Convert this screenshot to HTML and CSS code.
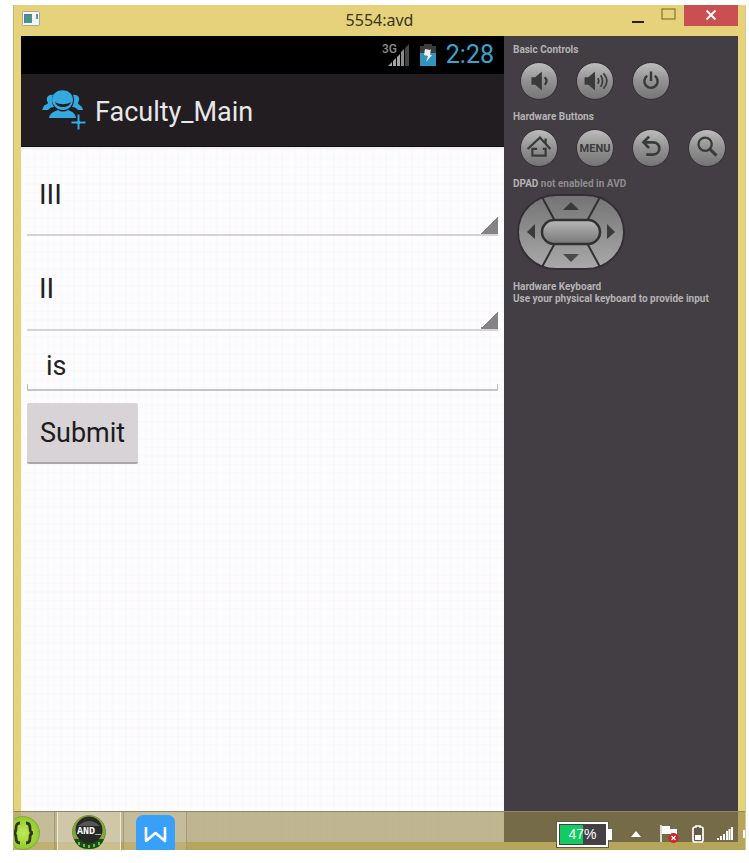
FILE: index.html
```html
<!DOCTYPE html>
<html lang="en">
<head>
<meta charset="utf-8">
<meta name="viewport" content="width=device-width, initial-scale=1">
<title>5554:avd</title>
<link rel="stylesheet" href="styles.css">
</head>
<body>
<div class="desktop">
  <header class="titlebar">
    <svg class="app-icon" width="18" height="15" viewBox="0 0 18 15"><rect x=".5" y=".5" width="17" height="14" rx="1" fill="#f4f6f4" stroke="#a7a998"/><rect x="2" y="3" width="8" height="9" fill="#4a9486"/><path d="M2 3h1v9H2zM2 3h8v1H2z" fill="#5878a0"/><rect x="14" y="3" width="2" height="5" fill="#5a9a98"/></svg>
    <h1 class="window-title">5554:avd</h1>
    <div class="window-buttons">
      <button class="win-btn minimize" aria-label="Minimize"><svg width="14" height="14" viewBox="0 0 14 14"><path d="M1 12h12v2.400H1z" fill="#26220f"/></svg></button>
      <button class="win-btn maximize" aria-label="Maximize"><svg width="15" height="12" viewBox="0 0 15 12"><rect x="1" y="1" width="13" height="10" fill="none" stroke="#8c7d3c" stroke-width="1.300"/></svg></button>
      <button class="win-btn close" aria-label="Close"><svg width="12" height="12" viewBox="0 0 12 12"><path d="M1.500 1.500l9 9M10.500 1.500l-9 9" stroke="#fff" stroke-width="1.900"/></svg></button>
    </div>
  </header>

  <div class="emulator">
    <main class="phone">
      <div class="statusbar">
        <svg width="28" height="26" viewBox="0 0 28 26">
          <text x="0" y="11" font-family="Roboto, sans-serif" font-size="12" font-weight="500" fill="#8d8d8d">3G</text>
          <path d="M6 24l4-4v4zM11 19l3-3v8h-3zM15 15l3-3v12h-3z" fill="#a5a5a5"/><path d="M19 10l3-3v17h-3z" fill="#8c8c8c"/><path d="M23 6l4-4v22h-4z" fill="#454545"/>
        </svg>
        <svg width="16" height="26" viewBox="0 0 16 26"><path d="M4 2h8v2h4v8H0V4h4z" fill="#3c3c3c"/><path d="M0 11h16v13H0z" fill="#3293bd"/><path d="M5 7l5 1 1-1-1 6h2l-6 7 2-6-4-1z" fill="#f0f0f0"/></svg>
        <time class="clock">2:28</time>
      </div>
      <div class="actionbar">
        <svg width="46" height="40" viewBox="0 0 46 40" fill="#33a9df">
          <path d="M2 18c1-4 4-3 5-5-3-5 0-9 5-8-2 4-1 9 1 12-3 0-4 1-6 3H1zM42 20c-1-5-5-5-5-7 3-5 0-9-5-8 2 4 1 9-1 12 3 0 4 1 6 3z"/>
          <path d="M11 10C11-3 32-3 32 10c0 5-4 10-10 10S11 15 11 10z"/>
          <path d="M14 12c5 3 11 3 16 0-1 3-4 5-8 5s-7-2-8-5z" fill="#211d21"/>
          <path d="M8 28c1-5 4-6 9-8 3 2 7 2 10 0 5 2 7 3 8 8z"/>
          <path d="M36 24h3v7h6v3h-6v6h-3v-6h-6v-3h6z" stroke="#211d21"/>
        </svg>
        <h2 class="app-title">Faculty_Main</h2>
      </div>
      <form class="form" onsubmit="return false">
        <div class="spinner"><select aria-label="Year"><option>III</option></select></div>
        <div class="spinner"><select aria-label="Semester"><option>II</option></select></div>
        <div class="field"><input type="text" aria-label="Subject" value="is" spellcheck="false"></div>
        <button class="submit" type="submit">Submit</button>
      </form>
    </main>

    <aside class="controls">
      <h3>Basic Controls</h3>
      <div class="keys">
        <button class="key" aria-label="Volume down"><svg viewBox="0 0 38 38"><path d="M11 15h4l7-6v20l-7-6h-4z" fill="#3b3a3b"/><path d="M25 15q4 4 0 8" fill="none" stroke="#3b3a3b" stroke-width="2.400"/></svg></button>
        <button class="key" aria-label="Volume up"><svg viewBox="0 0 38 38"><path d="M8 15h4l7-6v20l-7-6H8z" fill="#3b3a3b"/><path d="M22 16q2 3 0 6M25 13q4 6 0 12M28 11q7 8 0 16" fill="none" stroke="#3b3a3b" stroke-width="1.800"/></svg></button>
        <button class="key" aria-label="Power"><svg viewBox="0 0 38 38" fill="none" stroke="#3b3a3b" stroke-width="2.600"><path d="M15 13.500a7 7 0 1 0 8 0M19 9v10"/></svg></button>
      </div>
      <h3>Hardware Buttons</h3>
      <div class="keys">
        <button class="key" aria-label="Home"><svg viewBox="0 0 38 38" fill="none" stroke="#3b3a3b" stroke-width="2.300"><path d="M7 20L20 8l11 12M26 15V9M17 20h-5v7h14v-7h-3"/></svg></button>
        <button class="key key-text">MENU</button>
        <button class="key" aria-label="Back"><svg viewBox="0 0 38 38" fill="none" stroke="#3b3a3b" stroke-width="2.800"><path d="M17 7l-6 6 6 6M11 13h10c9 0 9 13 0 13h-7"/></svg></button>
        <button class="key" aria-label="Search"><svg viewBox="0 0 38 38" fill="none" stroke="#3b3a3b"><circle cx="17" cy="15" r="7" stroke-width="2.400"/><path d="M22 20l7 7" stroke-width="3.200"/></svg></button>
      </div>
      <h3>DPAD <span class="dim">not enabled in AVD</span></h3>
      <svg class="dpad" width="108" height="76" viewBox="0 0 108 76">
        <defs>
          <linearGradient id="pad" x2="0" y2="1"><stop stop-color="#737373"/><stop offset="1" stop-color="#aaa"/></linearGradient>
          <linearGradient id="mid" x2="0" y2="1"><stop stop-color="#b8b8b8"/><stop offset="1" stop-color="#777"/></linearGradient>
        </defs>
        <rect x="1" y="1" width="106" height="74" rx="38" fill="url(#pad)" stroke="#333034" stroke-width="2"/>
        <path d="M25 3l13 24M83 3L70 27M25 73l13-24M83 73L70 49" stroke="#333034" stroke-width="2"/>
        <rect x="25" y="26" width="58" height="24" rx="12" fill="url(#mid)" stroke="#333034" stroke-width="2.500"/>
        <path d="M46 16l8-8 8 8z" fill="#3b3a3b"/><path d="M46 60l8 8 8-8z" fill="#4b4a4b"/><path d="M18 30v15l-8-7zM90 30v15l8-7z" fill="#3b3a3b"/>
      </svg>
      <h3>Hardware Keyboard<br>Use your physical keyboard to provide input</h3>
    </aside>
  </div>

  <footer class="taskbar">
    <nav class="tasks" aria-label="Running apps">
      <button class="task first" aria-label="Editor"><svg width="26" height="36" viewBox="0 0 26 36"><defs><radialGradient id="lime"><stop stop-color="#c1e957"/><stop offset="1" stop-color="#8fc92e"/></radialGradient></defs><circle cx="9" cy="18" r="16.500" fill="url(#lime)" stroke="#86a83d"/><path d="M6 8q-4 0-4 5t-3 5q3 0 3 5t4 5M12 8q4 0 4 5t3 5q-3 0-3 5t-4 5" fill="none" stroke="#303a16" stroke-width="2.800"/></svg></button>
      <button class="task active" aria-label="Android emulator"><svg width="34" height="34" viewBox="0 0 34 34"><circle cx="17" cy="17" r="16.500" fill="#86aa36" stroke="#768f3d"/><path d="M2 24h30q-3 10-15 10T2 24z" fill="#164f19"/><path d="M6 27h2v3H6zM11 29h2v3h-2zM16 30h2v3h-2zM21 29h2v3h-2zM26 27h2v3h-2z" fill="#70bd38"/><circle cx="17" cy="15" r="13.500" fill="#262826"/><path d="M6 11q11-10 22 0z" fill="#555"/><text x="5" y="19" font-family="Liberation Mono, monospace" font-size="10" font-weight="700" fill="#fff">AND_</text></svg></button>
      <button class="task" aria-label="Writer"><svg width="39" height="36" viewBox="0 0 39 36"><rect width="39" height="40" rx="7" fill="#38a0f8"/><path d="M10 12v14l9.500-8 9.500 8V12" fill="none" stroke="#fff" stroke-width="2.600" stroke-linejoin="round"/></svg></button>
    </nav>
    <div class="tray">
      <div class="battery"><span>47%</span></div>
      <svg class="more" width="10" height="6" viewBox="0 0 10 6"><path d="M5 0l5 6H0z" fill="#fff"/></svg>
      <svg width="19" height="18" viewBox="0 0 19 18"><path d="M1 0v17" stroke="#fff" stroke-width="1.500"/><path d="M2 1h8v3h7v8l-7-1V9H2z" fill="#fff"/><circle cx="13.500" cy="13" r="5" fill="#cf2229"/><path d="M11.500 11l4 4M15.500 11l-4 4" stroke="#fff" stroke-width="1.300"/></svg>
      <svg width="12" height="18" viewBox="0 0 12 18"><path d="M4 2V1h4v1h1q2 0 2 2v11q0 2-2 2H3q-2 0-2-2V4q0-2 2-2z" fill="#635b48" stroke="#fff" stroke-width="1.700"/><path d="M3 10h6v5H3z" fill="#fff"/></svg>
      <svg width="16" height="14" viewBox="0 0 16 14"><path d="M0 11h2v2H0zM3 9h2v4H3zM6 7h2v6H6zM9 4h2v9H9zM11.500 2h2v11h-2zM14 0h2v13h-2z" fill="#fff"/></svg>
      <span class="edge"></span>
    </div>
  </footer>
</div>
</body>
</html>
```

FILE: styles.css
```css
* {
  box-sizing: border-box;
}

body {
  margin: 0;
  background: #fff;
  font-family: Roboto, "Liberation Sans", sans-serif;
}

h1,
h2,
h3 {
  margin: 0;
}

button,
input,
select {
  font-family: inherit;
  border: 0;
  margin: 0;
  padding: 0;
}

svg {
  display: block;
  flex: none;
}

/* Window frame */
.desktop {
  position: relative;
  display: flex;
  flex-direction: column;
  min-height: calc(100vh - 18px);
  margin: 5px 3px 13px 13px;
  padding: 0 7px 8px;
  background: #e6d27a;
  border-left: 1px solid #bdb07a;
  border-right: 1px solid #d3c995;
  overflow: hidden;
}

.titlebar {
  display: grid;
  grid-template-columns: 1fr auto 1fr;
  align-items: start;
  height: 31px;
}

.app-icon {
  margin: 6px 1px;
}

.window-title {
  font: 400 16px/30px "Noto Sans", "Open Sans", sans-serif;
  color: #3a3522;
}

.window-buttons {
  display: flex;
  justify-content: flex-end;
}

.win-btn {
  display: grid;
  place-items: center;
  width: 31px;
  height: 21px;
  background: none;
}

.maximize {
  padding-bottom: 3px;
}

.close {
  width: 54px;
  padding-bottom: 2px;
  background: #c94f50;
}

.emulator {
  flex: 1;
  display: flex;
}

/* Device screen */
.phone {
  flex: 1;
  display: flex;
  flex-direction: column;
  min-width: 0;
}

.statusbar {
  display: flex;
  align-items: center;
  justify-content: flex-end;
  gap: 10px;
  height: 38px;
  padding-right: 10px;
  background: #000;
}

.clock {
  font-size: 25px;
  line-height: 38px;
  color: #3ba3cf;
}

.actionbar {
  display: flex;
  align-items: center;
  gap: 8px;
  height: 73px;
  padding-left: 20px;
  background: #211d21;
  border-bottom: 1px solid #111;
}

.app-title {
  padding-top: 3px;
  font-size: 27px;
  font-weight: 400;
  color: #e8e8e8;
}

.form {
  flex: 1;
  padding: 0 6px;
  border-top: 2px solid #f1edf0;
  background:
    repeating-linear-gradient(90deg, #f1faf580 0 2px, transparent 2px 7px, #f3fbf680 7px 8px, transparent 8px 13px),
    repeating-linear-gradient(#f1faf580 0 2px, transparent 2px 9px, #f3fbf680 9px 10px, transparent 10px 17px),
    #fefcfe;
}

.spinner {
  position: relative;
  height: 95px;
  padding-top: 7px;
  border-bottom: 2px solid #d5d4d5;
}

.spinner:first-child {
  height: 87px;
  padding-top: 0;
}

.spinner::after {
  content: "";
  position: absolute;
  right: 0;
  bottom: 0;
  width: 18px;
  height: 18px;
  background: linear-gradient(135deg, transparent 50%, #858385 50%);
  pointer-events: none;
}

.spinner select {
  appearance: none;
  width: 100%;
  height: 90px;
  padding-left: 12px;
  background: none;
  font-size: 28px;
  color: #222;
}

.field input {
  display: block;
  width: 100%;
  height: 60px;
  padding: 12px 19px 0;
  background:
    linear-gradient(#bbb, #bbb) left bottom / 1px 5px no-repeat,
    linear-gradient(#bbb, #bbb) right bottom / 1px 5px no-repeat;
  border-bottom: 2px solid #c6c5c6;
  font-size: 27px;
  color: #222;
}

.submit {
  height: 61px;
  margin-top: 12px;
  padding: 0 13px;
  background: #d7d3d7;
  border-bottom: 2px solid #aaa7aa;
  border-radius: 2px;
  font-size: 27px;
  color: #1c1c1c;
}

/* Hardware panel */
.controls {
  width: 234px;
  flex: none;
  padding: 8px 9px;
  background: #433e43;
}

.controls h3 {
  font-size: 10px;
  font-weight: 700;
  line-height: 12px;
  color: #b5b3b5;
}

.controls .dim {
  color: #8f8d8f;
}

.keys {
  display: grid;
  grid-template-columns: repeat(4, 38px);
  gap: 18px;
  margin: 6px 0 11px 7px;
}

.key {
  width: 38px;
  height: 38px;
  border: 1px solid #353135;
  border-radius: 50%;
  background: linear-gradient(#bdbdbd, #929292 50%, #757575);
}

.key svg {
  width: 36px;
  height: 36px;
}

.key-text {
  font-size: 11px;
  font-weight: 700;
  color: #3b3a3b;
}

.dpad {
  margin: 4px 0 11px 4px;
}

/* Translucent taskbar laid over the bottom of the window */
.taskbar {
  position: absolute;
  inset: auto 0 0;
  display: flex;
  justify-content: space-between;
  height: 39px;
  background: rgba(150, 135, 76, 0.61);
  border-top: 1px solid #8e865f;
}

.tasks {
  display: flex;
  gap: 2px;
}

.task {
  display: flex;
  justify-content: center;
  align-items: flex-start;
  width: 64px;
  padding-top: 3px;
  background: rgba(220, 210, 185, 0.25);
  border: solid #a39b78;
  border-width: 0 1px;
}

.task.first {
  width: 41px;
  justify-content: flex-start;
  border-left: 0;
}

.task.active {
  background: rgba(225, 218, 195, 0.5);
  border-color: #eeead6;
}

.tray {
  display: flex;
  align-items: center;
  gap: 13px;
  padding: 6px 0 0;
}

.battery {
  position: relative;
  width: 51px;
  height: 25px;
  margin-right: 10px;
  border: 2px solid #fff;
  outline: 1px solid #605a43;
  background: linear-gradient(90deg, #12cb62 52%, #444044 52%);
  box-shadow: inset 0 0 0 1px #444044;
  color: #fff;
  font: 14px/21px "Liberation Sans", sans-serif;
  text-align: center;
}

.battery::after {
  content: "";
  position: absolute;
  left: 49px;
  top: 5px;
  width: 4px;
  height: 11px;
  background: #fff;
}

.more {
  margin-right: 6px;
}

.edge {
  width: 2px;
  height: 8px;
  margin-left: -3px;
  background: #fff;
}
```
